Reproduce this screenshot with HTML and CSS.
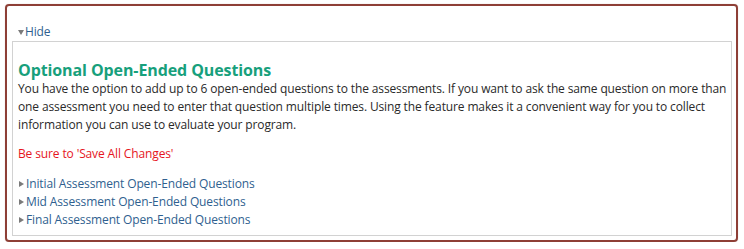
FILE: index.html
```html
<!DOCTYPE html>
<html>
<head>
<meta charset="utf-8">
<link rel="stylesheet" href="styles.css">
</head>
<body>
<div class="panel">
  <div class="toggle"><span class="tri-down"></span><a class="link">Hide</a></div>
  <div class="box">
    <h2 class="title">Optional Open-Ended Questions</h2>
    <p class="desc">You have the option to add up to 6 open-ended questions to the assessments. If you want to ask the same question on more than one assessment you need to enter that question multiple times. Using the feature makes it a convenient way for you to collect information you can use to evaluate your program.</p>
    <p class="warn">Be sure to 'Save All Changes'</p>
    <ul class="sections">
      <li><span class="tri-right"></span><a class="link">Initial Assessment Open-Ended Questions</a></li>
      <li><span class="tri-right"></span><a class="link">Mid Assessment Open-Ended Questions</a></li>
      <li><span class="tri-right"></span><a class="link">Final Assessment Open-Ended Questions</a></li>
    </ul>
  </div>
</div>
</body>
</html>
```
FILE: styles.css
```css
html, body {
  margin: 0;
  padding: 0;
  background: #ffffff;
}
body {
  padding: 4px 0 0 5px;
  font-family: "Open Sans", "DejaVu Sans", sans-serif;
  font-size: 12px;
  letter-spacing: -0.13px;
  color: #2a2a2a;
}
.panel {
  border: 2px solid #8e3f36;
  border-radius: 4px;
  box-shadow: 0 0 1px rgba(140, 60, 50, 0.4);
  padding: 17px 0 0 5px;
  box-sizing: border-box;
  width: 733px;
  height: 238px;
}
.toggle {
  display: flex;
  align-items: center;
  height: 18px;
  line-height: 18px;
  padding-left: 6px;
}
.link {
  color: #2f5f8f;
  text-decoration: none;
}
.tri-down {
  width: 0;
  height: 0;
  border-left: 3px solid transparent;
  border-right: 3px solid transparent;
  border-top: 5px solid #7a7a7a;
  margin-right: 1px;
}
.tri-right {
  display: inline-block;
  width: 0;
  height: 0;
  border-top: 3px solid transparent;
  border-bottom: 3px solid transparent;
  border-left: 5px solid #7a7a7a;
  margin-right: 2px;
  vertical-align: 1px;
}
.box {
  width: 720px;
  height: 195px;
  box-sizing: border-box;
  border: 1px solid #d2d2d2;
  padding: 18px 0 6px 5px;
}
.title {
  margin: 0;
  font-size: 16px;
  line-height: 20px;
  font-weight: bold;
  letter-spacing: -0.1px;
  color: #17a07c;
}
.desc {
  margin: 0;
  line-height: 18px;
}
.warn {
  margin: 11px 0 0;
  line-height: 18px;
  color: #e6161e;
}
.sections {
  list-style: none;
  margin: 12px 0 0;
  padding: 0;
}
.sections li {
  line-height: 18px;
  padding-left: 1px;
}
```
